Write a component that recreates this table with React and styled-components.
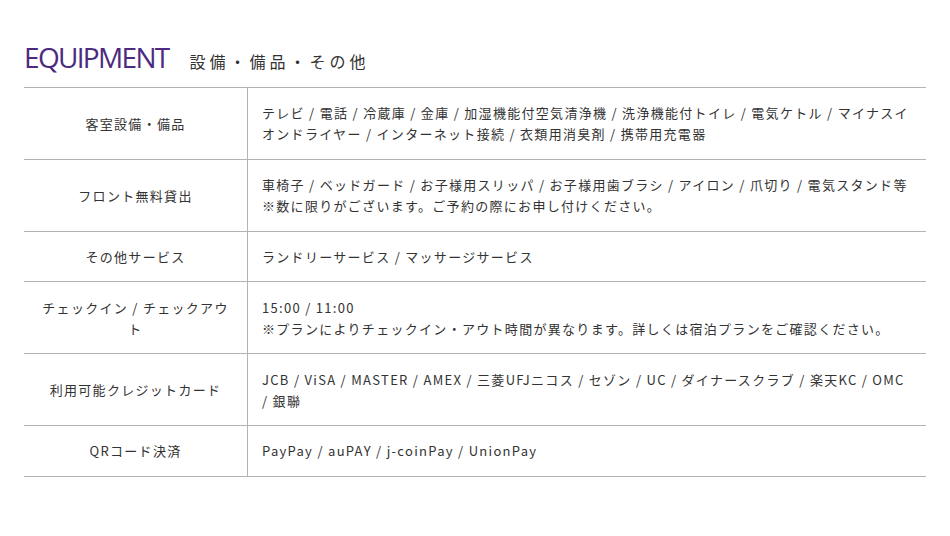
import React from "react";
import styled, { createGlobalStyle } from "styled-components";

const Global = createGlobalStyle`
  html, body { margin: 0; padding: 0; background: #fff; }
  body { font-family: "Noto Sans CJK JP", "Noto Sans", sans-serif; color: #333; }
`;

const Page = styled.div`
  padding: 40px 24px 0 24px;
`;

const Heading = styled.div`
  display: flex;
  align-items: baseline;
  gap: 21px;
  margin-bottom: 12px;
`;

const Title = styled.h2`
  margin: 0;
  font-family: "Open Sans", "Noto Sans", sans-serif;
  font-weight: 400;
  font-size: 28px;
  line-height: 35px;
  color: #4b2a80;
  letter-spacing: -0.06em;
`;

const Sub = styled.span`
  font-family: "Noto Sans CJK JP", sans-serif;
  font-size: 16px;
  letter-spacing: 0.25em;
  color: #333;
`;

const Table = styled.div`
  border-top: 1px solid #b3b3b3;
  display: grid;
  grid-template-columns: 224px 1fr;
`;

const Label = styled.div`
  border-bottom: 1px solid #b3b3b3;
  border-right: 1px solid #b3b3b3;
  padding: 14.4px 14px;
  font-size: 13px;
  line-height: 21px;
  letter-spacing: 0.1em;
  text-align: center;
  display: flex;
  align-items: center;
  justify-content: center;
`;

const Value = styled.div`
  border-bottom: 1px solid #b3b3b3;
  padding: 14.4px 16px 14.4px 14px;
  font-size: 13px;
  line-height: 21px;
  letter-spacing: 0.1em;
`;

const rows = [
  ["客室設備・備品", ["テレビ / 電話 / 冷蔵庫 / 金庫 / 加湿機能付空気清浄機 / 洗浄機能付トイレ / 電気ケトル / マイナスイオンドライヤー / インターネット接続 / 衣類用消臭剤 / 携帯用充電器"]],
  ["フロント無料貸出", ["車椅子 / ベッドガード / お子様用スリッパ / お子様用歯ブラシ / アイロン / 爪切り / 電気スタンド等", "※数に限りがございます。ご予約の際にお申し付けください。"]],
  ["その他サービス", ["ランドリーサービス / マッサージサービス"]],
  ["チェックイン / チェックアウト", ["15:00 / 11:00", "※プランによりチェックイン・アウト時間が異なります。詳しくは宿泊プランをご確認ください。"]],
  ["利用可能クレジットカード", ["JCB / ViSA / MASTER / AMEX / 三菱UFJニコス / セゾン / UC / ダイナースクラブ / 楽天KC / OMC / 銀聯"]],
  ["QRコード決済", ["PayPay / auPAY / j-coinPay / UnionPay"]],
];

export default function App() {
  return (
    <Page>
      <Global />
      <Heading>
        <Title>EQUIPMENT</Title>
        <Sub>設備・備品・その他</Sub>
      </Heading>
      <Table>
        {rows.map(([label, lines]) => (
          <React.Fragment key={label}>
            <Label>{label}</Label>
            <Value>
              {lines.map((l, i) => (
                <div key={i}>{l}</div>
              ))}
            </Value>
          </React.Fragment>
        ))}
      </Table>
    </Page>
  );
}
